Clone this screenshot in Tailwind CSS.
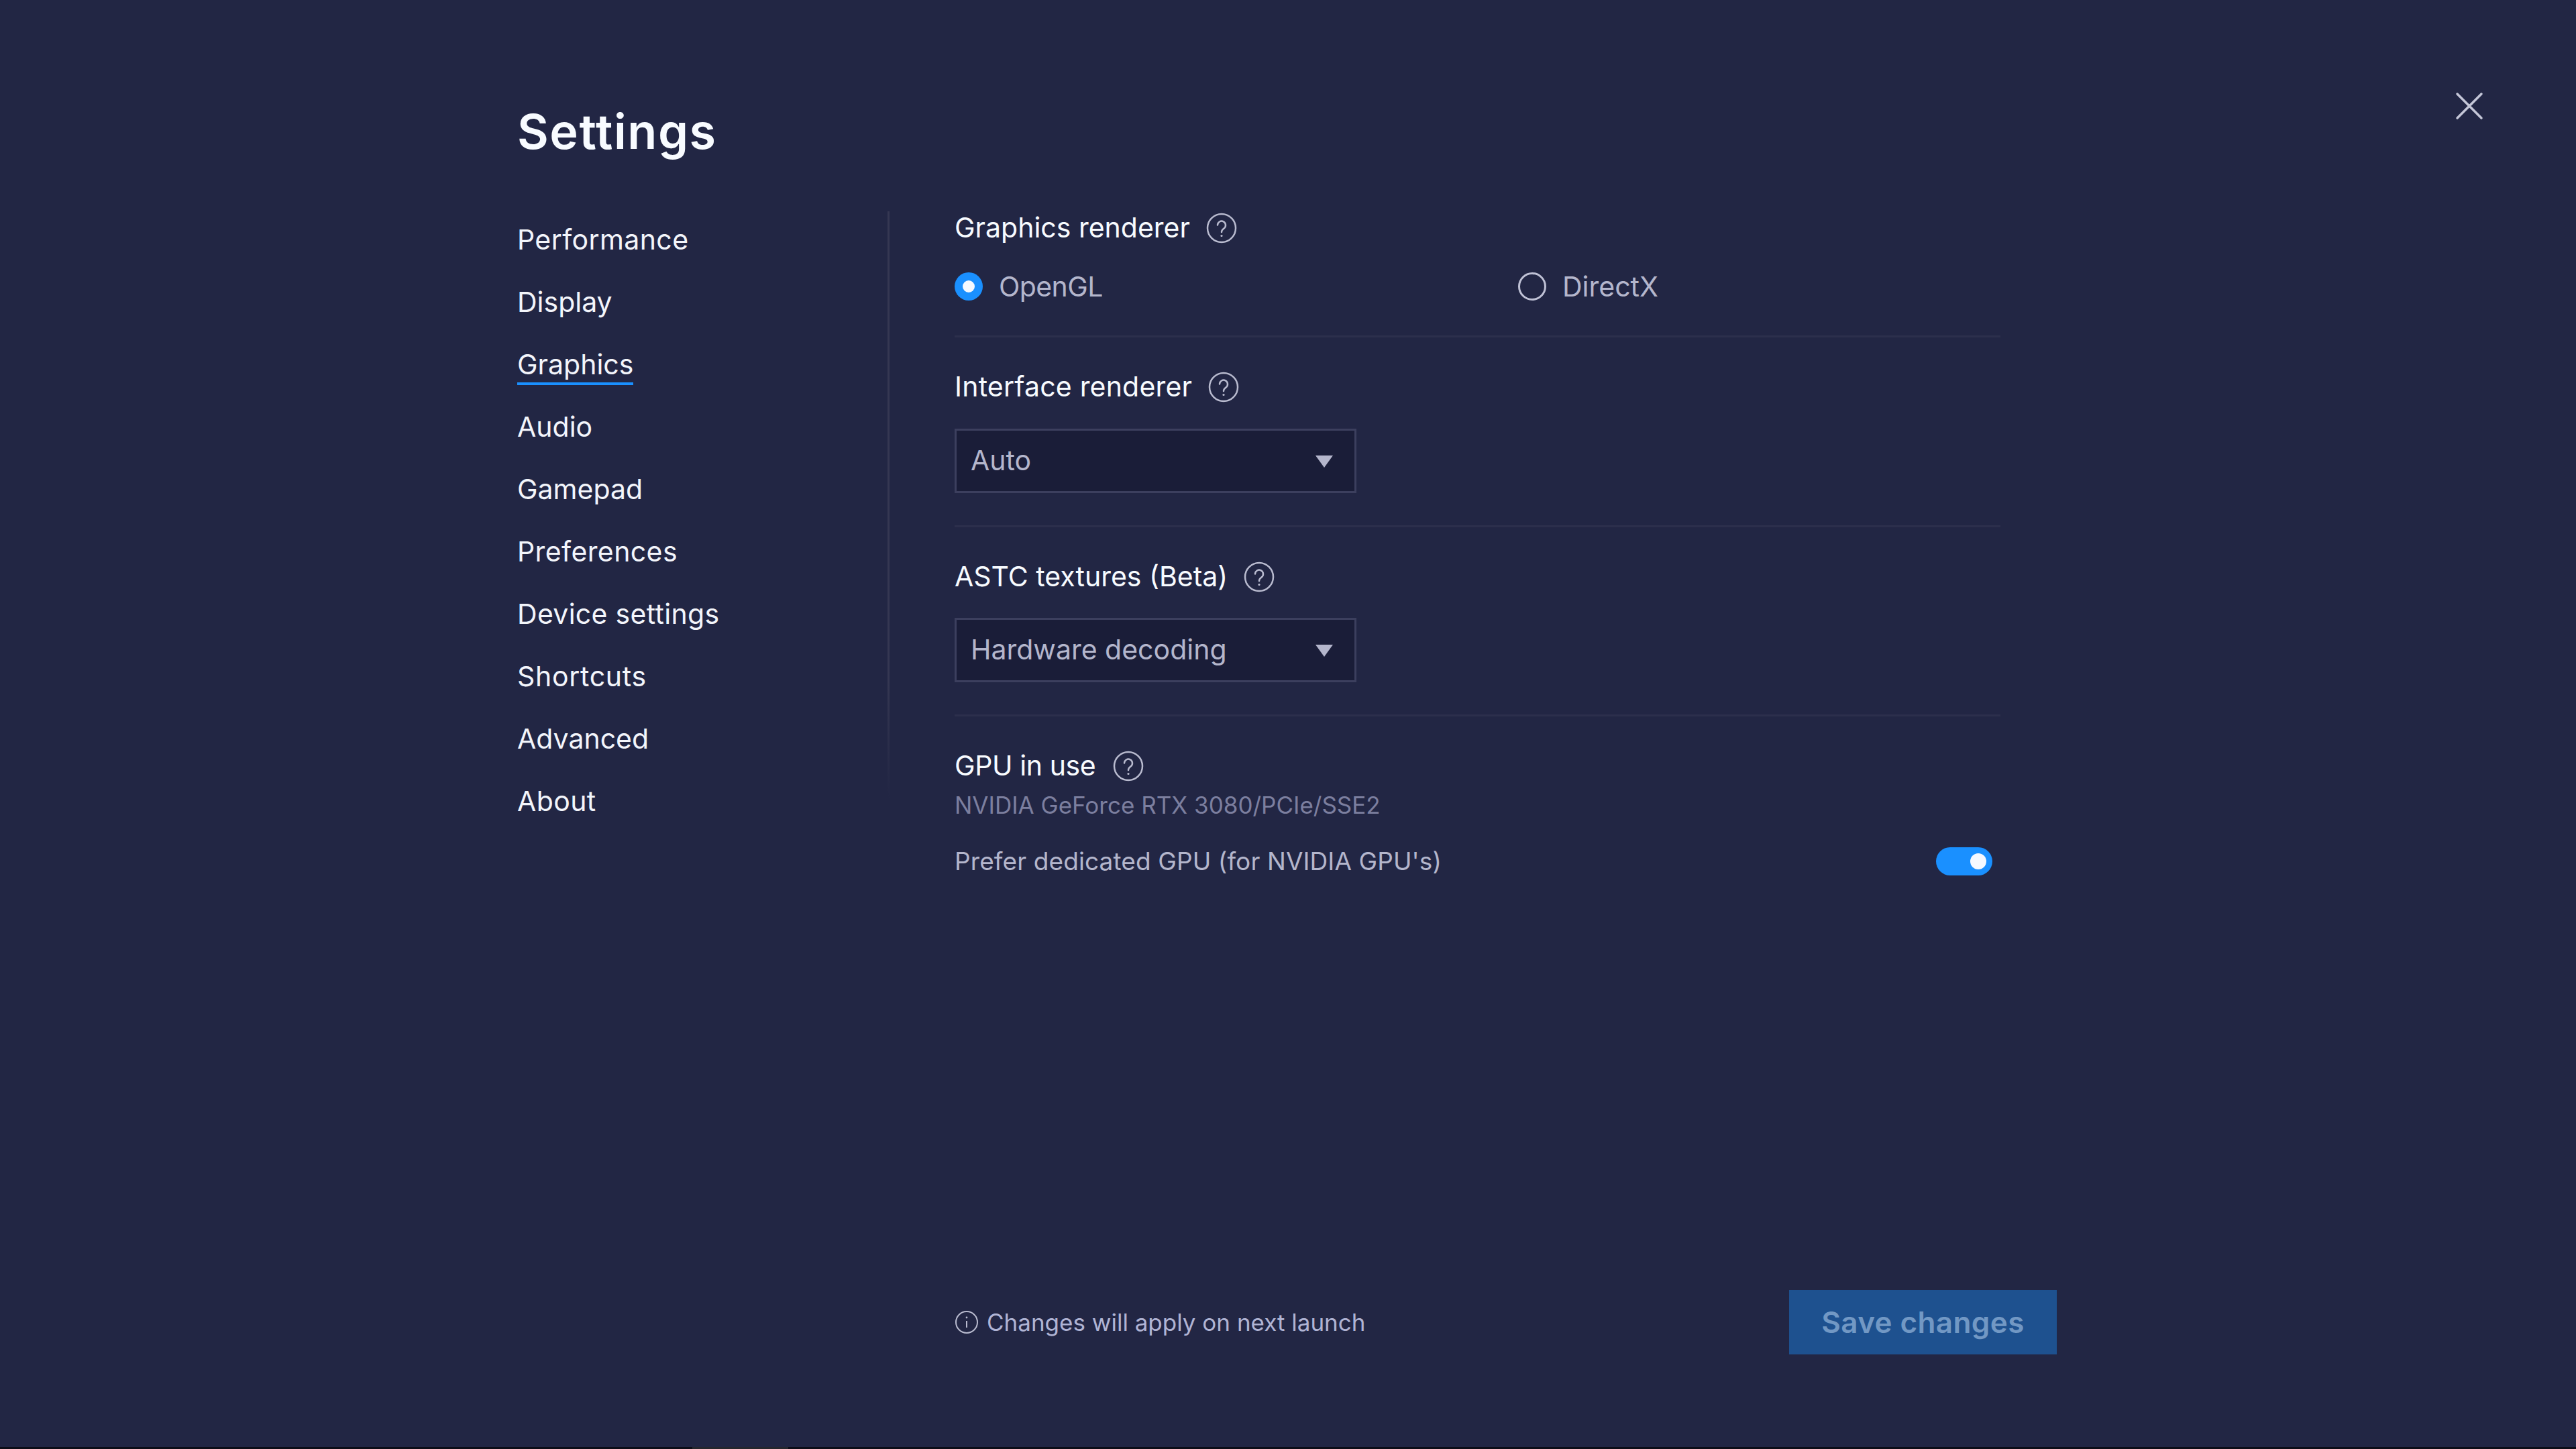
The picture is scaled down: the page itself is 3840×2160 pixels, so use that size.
<!DOCTYPE html>
<html lang="en">
<head>
    <meta charset="UTF-8">
    <title>Settings</title>
    <script src="https://cdn.jsdelivr.net/npm/@tailwindcss/browser@4"></script>
</head>
<body class="bg-[#222644] font-['Inter',sans-serif]">
    <div class="relative flex flex-col w-[3840px] h-[2160px] overflow-hidden">
        <!-- Close -->
        <svg class="absolute left-[3657px] top-[134px] w-[48px] h-[48px]" viewBox="0 0 48 48" fill="none" stroke="#c5c7d8" stroke-width="3.5" stroke-linecap="round"><path d="M6 6 42 42M42 6 6 42"/></svg>

        <h1 class="shrink-0 pl-[771px] pt-[153px] h-[315px] text-[72px] leading-[85px] font-semibold tracking-[1.5px] text-[#f8fbff]">Settings</h1>

        <div class="flex flex-1 min-h-0 pl-[771px]">
            <!-- Sidebar -->
            <nav class="flex flex-col w-[552px] -mt-[4px] text-[41px] leading-[93px] text-[#f3f5fb]">
                <a class="h-[93px] tracking-[0.4px]">Performance</a>
                <a class="h-[93px]">Display</a>
                <a class="h-[93px]"><span class="inline-block h-[77px] border-b-4 border-[#1a90ff]">Graphics</span></a>
                <a class="h-[93px]">Audio</a>
                <a class="h-[93px]">Gamepad</a>
                <a class="h-[93px] tracking-[0.4px]">Preferences</a>
                <a class="h-[93px] tracking-[0.3px]">Device settings</a>
                <a class="h-[93px] tracking-[0.7px]">Shortcuts</a>
                <a class="h-[93px]">Advanced</a>
                <a class="h-[93px] tracking-[0.4px]">About</a>
            </nav>
            <div class="w-[3px] h-[875px] bg-linear-to-b from-[#353752] from-80% to-[#222644]"></div>
            <!-- Content -->
            <main class="w-[1559px] ml-[97px] flex flex-col">
                <section class="shrink-0 h-[188px] border-b-[3px] border-[#2c2f4c]">
                    <div class="flex items-center h-[50px] text-[41px] text-[#f8fbff]">
                        <span>Graphics renderer</span>
                        <svg class="ml-[24px] w-[46px] h-[46px]" viewBox="0 0 46 46" fill="none" stroke="#b9bbcf" stroke-width="2.5"><circle cx="23" cy="23" r="21"/><path d="M17 18.5a6 6 0 1 1 9.5 5c-2.4 1.7-3.5 2.6-3.5 5.5" stroke-linecap="round"/><circle cx="23" cy="34.5" r="1.6" fill="#b9bbcf" stroke="none"/></svg>
                    </div>
                    <div class="flex mt-[37px] text-[41px] leading-[50px] text-[#b4b6cc]">
                        <label class="flex items-center w-[840px]">
                            <span class="flex items-center justify-center w-[42px] h-[42px] rounded-full bg-[#1a90ff]"><span class="w-[18px] h-[18px] rounded-full bg-[#f5f9ff]"></span></span>
                            <span class="ml-[24px] tracking-[-0.6px]">OpenGL</span>
                        </label>
                        <label class="flex items-center">
                            <span class="w-[42px] h-[42px] rounded-full border-[3px] border-[#bfc1d5]"></span>
                            <span class="ml-[24px]">DirectX</span>
                        </label>
                    </div>
                </section>
                <section class="shrink-0 h-[283px] border-b-[3px] border-[#2c2f4c] pt-[49px]">
                    <div class="flex items-center h-[50px] text-[41px] text-[#f8fbff] tracking-[0.2px]">
                        <span>Interface renderer</span>
                        <svg class="ml-[24px] w-[46px] h-[46px]" viewBox="0 0 46 46" fill="none" stroke="#b9bbcf" stroke-width="2.5"><circle cx="23" cy="23" r="21"/><path d="M17 18.5a6 6 0 1 1 9.5 5c-2.4 1.7-3.5 2.6-3.5 5.5" stroke-linecap="round"/><circle cx="23" cy="34.5" r="1.6" fill="#b9bbcf" stroke="none"/></svg>
                    </div>
                    <div class="flex items-center justify-between mt-[37px] w-[599px] h-[96px] pl-[21px] pr-[32px] bg-[#1a1d38] border-[3px] border-[#3c3f5e] text-[41px] text-[#b4b6cc]">
                        <span>Auto</span>
                        <svg class="mt-[2px] w-[26px] h-[18px]" viewBox="0 0 26 18"><path d="M0 0H26L13 18Z" fill="#b4b6cc"/></svg>
                    </div>
                </section>
                <section class="shrink-0 h-[282px] border-b-[3px] border-[#2c2f4c] pt-[49px]">
                    <div class="flex items-center h-[50px] text-[41px] text-[#f8fbff]">
                        <span>ASTC textures (Beta)</span>
                        <svg class="ml-[24px] w-[46px] h-[46px]" viewBox="0 0 46 46" fill="none" stroke="#b9bbcf" stroke-width="2.5"><circle cx="23" cy="23" r="21"/><path d="M17 18.5a6 6 0 1 1 9.5 5c-2.4 1.7-3.5 2.6-3.5 5.5" stroke-linecap="round"/><circle cx="23" cy="34.5" r="1.6" fill="#b9bbcf" stroke="none"/></svg>
                    </div>
                    <div class="flex items-center justify-between mt-[36px] w-[599px] h-[96px] pl-[21px] pr-[32px] bg-[#1a1d38] border-[3px] border-[#3c3f5e] text-[41px] text-[#b4b6cc]">
                        <span>Hardware decoding</span>
                        <svg class="mt-[2px] w-[26px] h-[18px]" viewBox="0 0 26 18"><path d="M0 0H26L13 18Z" fill="#b4b6cc"/></svg>
                    </div>
                </section>
                <section class="shrink-0 pt-[49px]">
                    <div class="flex items-center h-[50px] text-[41px] text-[#f8fbff] tracking-[-0.4px]">
                        <span>GPU in use</span>
                        <svg class="ml-[26px] w-[46px] h-[46px]" viewBox="0 0 46 46" fill="none" stroke="#b9bbcf" stroke-width="2.5"><circle cx="23" cy="23" r="21"/><path d="M17 18.5a6 6 0 1 1 9.5 5c-2.4 1.7-3.5 2.6-3.5 5.5" stroke-linecap="round"/><circle cx="23" cy="34.5" r="1.6" fill="#b9bbcf" stroke="none"/></svg>
                    </div>
                    <p class="mt-[11px] text-[35px] leading-[45px] text-[#7c7f9f]">NVIDIA GeForce RTX 3080/PCIe/SSE2</p>
                    <div class="flex items-center justify-between mt-[33px] h-[56px] pr-[12px] text-[37px] text-[#b4b6cc] tracking-[0.1px]">
                        <span>Prefer dedicated GPU (for NVIDIA GPU's)</span>
                        <span class="flex items-center justify-end w-[84px] h-[42px] pr-[9px] rounded-full bg-[#1a90ff]"><span class="w-[24px] h-[24px] rounded-full bg-[#f5f9ff]"></span></span>
                    </div>
                </section>
            </main>
        </div>

        <!-- Footer -->
        <div class="shrink-0 flex items-center justify-between w-[1643px] ml-[1423px] mb-[141px] h-[96px]">
            <div class="flex items-center text-[35px] text-[#b0b4d4]">
                <svg class="w-[36px] h-[36px]" viewBox="0 0 36 36" fill="none" stroke="#b9bbcf" stroke-width="2"><circle cx="18" cy="18" r="16"/><path d="M18 16V26"/><circle cx="18" cy="11" r="1.4" fill="#b9bbcf" stroke="none"/></svg>
                <span class="ml-[12px]">Changes will apply on next launch</span>
            </div>
            <button class="w-[399px] h-[96px] bg-[#1e518f] text-[44px] font-semibold tracking-[0.4px] text-[#7298c4]">Save changes</button>
        </div>

        <!-- Window bottom edge -->
        <div class="absolute left-0 bottom-0 flex w-full h-[3px] bg-[#0c0d18]">
            <div class="ml-[1032px] w-[143px] bg-[#25262e]"></div>
        </div>
    </div>
</body>
</html>
